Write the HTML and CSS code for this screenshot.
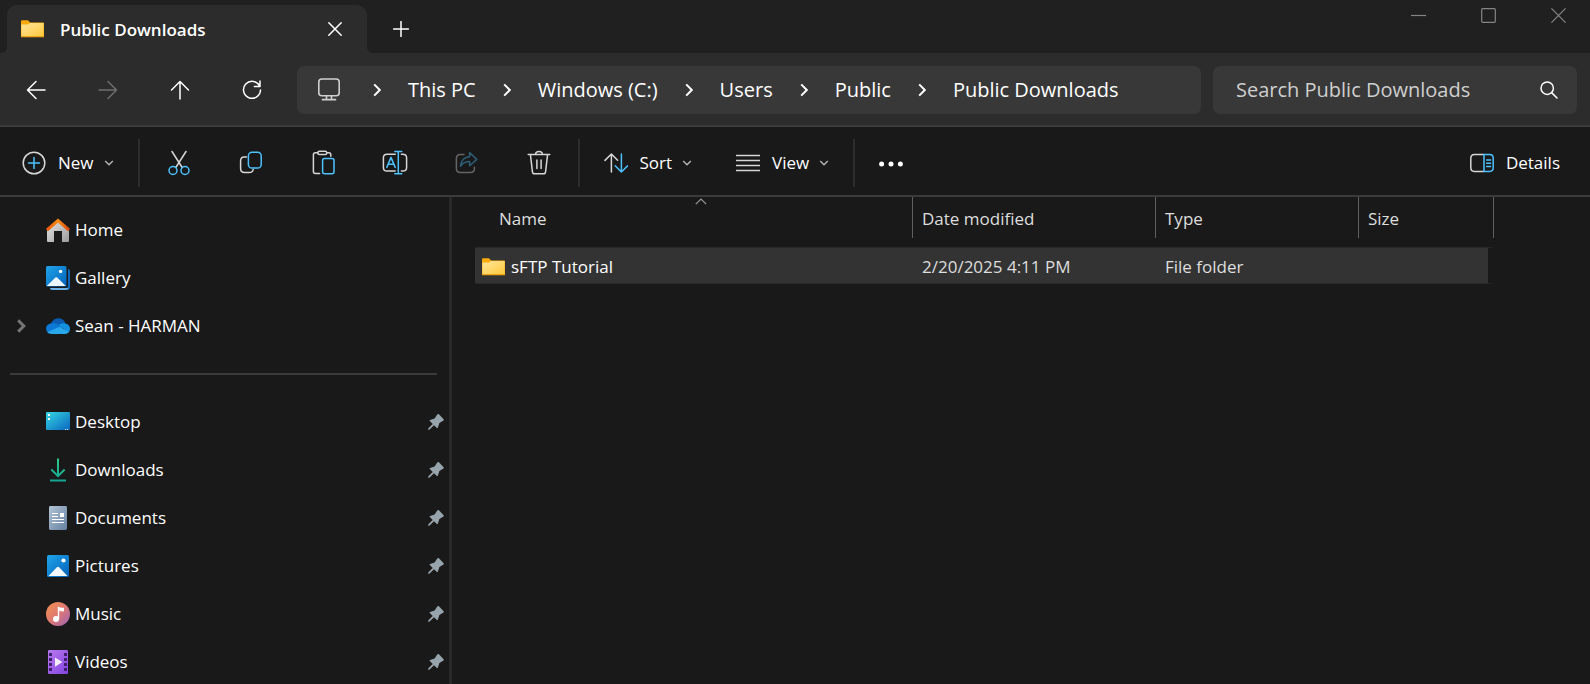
FILE: index.html
```
<!DOCTYPE html>
<html lang="en">
<head>
    <meta charset="UTF-8">
    <meta name="viewport" content="width=device-width, initial-scale=1.0">
    <title>Public Downloads</title>
    <link rel="stylesheet" href="styles.css">
</head>
<body>
    <svg class="defs" aria-hidden="true">
        <defs>
            <linearGradient id="g-folder" x1="0" y1="0" x2="1" y2="1"><stop offset="0" stop-color="#ffe69c"/><stop offset="1" stop-color="#ffc93c"/></linearGradient>
            <linearGradient id="g-blue" x1="0" y1="0" x2="1" y2="1"><stop offset="0" stop-color="#1fa5ea"/><stop offset="1" stop-color="#0560b8"/></linearGradient>
            <linearGradient id="g-roof" x1="0" y1="0" x2="1" y2="0"><stop offset="0" stop-color="#e8590c"/><stop offset=".5" stop-color="#f98a16"/><stop offset="1" stop-color="#d64a0b"/></linearGradient>
            <linearGradient id="g-wall" x1="0" y1="0" x2="1" y2="1"><stop offset="0" stop-color="#e6e6e6"/><stop offset="1" stop-color="#9c9c9c"/></linearGradient>
            <linearGradient id="g-desk" x1="0" y1="0" x2="1" y2="1"><stop offset="0" stop-color="#35d6e2"/><stop offset="1" stop-color="#0a66c0"/></linearGradient>
            <linearGradient id="g-down" x1="0" y1="0" x2="0" y2="1"><stop offset="0" stop-color="#2fc98a"/><stop offset="1" stop-color="#12a594"/></linearGradient>
            <linearGradient id="g-doc" x1="0" y1="0" x2="1" y2="1"><stop offset="0" stop-color="#b3c4d6"/><stop offset="1" stop-color="#64809f"/></linearGradient>
            <linearGradient id="g-music" x1="0" y1="0" x2="1" y2="1"><stop offset="0" stop-color="#f6934c"/><stop offset=".5" stop-color="#de7872"/><stop offset="1" stop-color="#9a63b8"/></linearGradient>
            <linearGradient id="g-video" x1="0" y1="0" x2="1" y2="1"><stop offset="0" stop-color="#b87af0"/><stop offset="1" stop-color="#8443e0"/></linearGradient>
        </defs>
        <symbol id="i-folder" viewBox="0 0 23 18">
            <path d="M0 1.5Q0 .3 1.2 .3H7l2 2.2h13q1 0 1 1V17H0z" fill="#f9ab0c"/>
            <path d="M.4 4.5h6.8l1.8-1.6h13.6v13.6H.4z" fill="url(#g-folder)"/>
            <path d="M0 16.8h23" stroke="#e39a0a"/>
        </symbol>
        <symbol id="i-chev-right" viewBox="0 0 8 14"><path d="M1.2 1.4 6.8 7l-5.6 5.6"/></symbol>
        <symbol id="i-chev-down" viewBox="0 0 10 6"><path d="m1.2.9 3.8 3.8L8.8.9"/></symbol>
        <symbol id="i-pin" viewBox="0 0 16 16">
            <path d="M9.4.3Q10.4-.2 11.2.6l4.2 4.500q.9 1-.3 1.700L11.400 9l-1.500 4.400q-.4 1-1.200.3L6 11.200 1.600 15.600.2 16l.2-1.700L4.700 9.900 1.800 7.100q-.7-.8.4-1.200l4.400-1.400z"/>
        </symbol>
    </svg>

    <div class="window">
        <header class="titlebar">
            <div class="tab">
                <svg class="folder"><use href="#i-folder"/></svg>
                <span class="tab-title">Public Downloads</span>
                <button class="tab-close" aria-label="Close tab">
                    <svg width="14" height="14" class="line"><path d="M.8.8l12.4 12.4M13.2.8.8 13.2"/></svg>
                </button>
            </div>
            <button class="new-tab" aria-label="New tab">
                <svg width="16" height="16" class="line"><path d="M8 .5v15M.5 8h15"/></svg>
            </button>
            <div class="window-controls">
                <button aria-label="Minimize"><svg width="15" height="15" class="line"><path d="M0 7.5h15"/></svg></button>
                <button aria-label="Maximize"><svg width="15" height="15" class="line"><rect x=".7" y=".7" width="13.6" height="13.6" rx="1"/></svg></button>
                <button aria-label="Close"><svg width="15" height="15" class="line"><path d="M.4.4l14.2 14.2M14.6.4.4 14.6"/></svg></button>
            </div>
        </header>

        <div class="navbar">
            <nav class="nav-buttons">
                <button aria-label="Back"><svg width="20" height="20" class="line"><path d="M19 10H1.5M10 1.5 1.5 10l8.500 8.500"/></svg></button>
                <button aria-label="Forward" disabled><svg width="20" height="20" class="line"><path d="M1 10h17.500M10 1.500l8.500 8.500-8.500 8.500"/></svg></button>
                <button aria-label="Up"><svg width="20" height="20" class="line"><path d="M10 19V1.500M1.500 10 10 1.500l8.500 8.500"/></svg></button>
                <button aria-label="Refresh"><svg width="20" height="20" class="line"><path d="M17.600 6A8.500 8.500 0 1 0 18.500 10M18 1v5.600h-5.600"/></svg></button>
            </nav>
            <div class="address">
                <svg width="24" height="24" class="pc"><rect x="1.8" y="1" width="20.4" height="16.8" rx="3"/><path d="M9.500 17.800v3.600M14.500 17.800v3.600M4.800 21.600h14.400"/></svg>
                <svg class="crumb-sep"><use href="#i-chev-right"/></svg>
                <a href="#">This PC</a>
                <svg class="crumb-sep"><use href="#i-chev-right"/></svg>
                <a href="#">Windows (C:)</a>
                <svg class="crumb-sep"><use href="#i-chev-right"/></svg>
                <a href="#">Users</a>
                <svg class="crumb-sep"><use href="#i-chev-right"/></svg>
                <a href="#">Public</a>
                <svg class="crumb-sep"><use href="#i-chev-right"/></svg>
                <a href="#">Public Downloads</a>
            </div>
            <div class="search">
                <input type="text" placeholder="Search Public Downloads" aria-label="Search Public Downloads">
                <svg width="18" height="18" class="line"><circle cx="7.2" cy="7.2" r="6.2"/><path d="m11.6 11.6 5.4 5.4"/></svg>
            </div>
        </div>

        <div class="commands">
            <button class="command">
                <svg width="24" height="24" class="icon"><circle cx="12" cy="12" r="10.8"/><path class="accent" d="M12 6.500v11M6.500 12h11"/></svg>
                New
                <svg class="chevron"><use href="#i-chev-down"/></svg>
            </button>
            <span class="divider"></span>
            <div class="icon-buttons">
                <button aria-label="Cut">
                    <svg width="24" height="26" class="icon"><path d="M5 1.500l10.200 16M19 1.500 8.800 17.500"/><g class="accent"><circle cx="6" cy="20.5" r="4"/><circle cx="18" cy="20.5" r="4"/></g></svg>
                </button>
                <button aria-label="Copy">
                    <svg width="24" height="26" class="icon"><path d="M7.500 7H5.200Q1.600 7 1.600 11v7.500q0 4 4 4h4.600q3.600 0 4-3"/><rect class="accent" x="9.4" y="2.2" width="12.8" height="15.8" rx="3.6"/></svg>
                </button>
                <button aria-label="Paste">
                    <svg width="24" height="26" class="icon"><path d="M8.600 23.600H4.400q-2 0-2-2V4.800q0-2 2-2h2.400M15.800 2.800h2q2 0 2 2v1.400"/><rect x="6.8" y="1.3" width="9" height="3.2" rx="1.6"/><rect class="accent" x="11.6" y="8.4" width="11.4" height="15.4" rx="2"/></svg>
                </button>
                <button aria-label="Rename">
                    <svg width="26" height="26" class="icon"><path d="M13.200 4.200H5Q1.400 4.200 1.400 7.800v9.600q0 3.600 3.600 3.600h8.200M19.400 4.200h1.200q4 0 4 3.600v9.600q0 3.600-4 3.600h-1.200"/><path class="accent" d="M4.800 17.400 9 7.400l4.200 10M6.200 14.200h5.600M16.300 1.400v22.400M12.800 1.400h7M12.800 23.800h7"/></svg>
                </button>
                <button aria-label="Share" disabled>
                    <svg width="24" height="26" class="icon"><path d="M9 4.400H5.400q-4 0-4 4v10q0 4 4 4h10q4 0 4-4v-1.200"/><path class="accent" d="M14.600 2.600v4.200Q6.600 7.200 5.400 16.200q3.600-4.600 9.200-4.600v4.200l7.200-6.400z"/></svg>
                </button>
                <button aria-label="Delete">
                    <svg width="24" height="26" class="icon"><path d="M1.200 4.400h21.600M8.600 4.400q0-3 3.400-3t3.400 3M3.400 4.400l2 17.200q.2 2.200 2.200 2.200h8.800q2 0 2.200-2.200l2-17.200M9.900 10v8.400M14.100 10v8.400"/></svg>
                </button>
            </div>
            <span class="divider"></span>
            <button class="command">
                <svg width="24" height="24" class="icon"><path d="M7.400 21V3M1 9.400 7.400 3l6.200 6.200"/><path class="accent" d="M17.400 3v18M11.200 14.800l6.200 6.200 6.200-6.200"/></svg>
                Sort
                <svg class="chevron"><use href="#i-chev-down"/></svg>
            </button>
            <button class="command">
                <svg width="24" height="24" class="icon"><path d="M0 4.500h24M0 9.500h24M0 14.500h24M0 19.500h24"/></svg>
                View
                <svg class="chevron"><use href="#i-chev-down"/></svg>
            </button>
            <span class="divider"></span>
            <button class="command" aria-label="See more">
                <svg width="24" height="24" class="dots"><circle cx="2.6" cy="13" r="2.5"/><circle cx="12" cy="13" r="2.5"/><circle cx="21.4" cy="13" r="2.5"/></svg>
            </button>
            <button class="command details">
                <svg width="24" height="20" class="icon"><path d="M13.600 1.600H4.400Q.8 1.600.8 5.200v9.600q0 3.600 3.600 3.600h9.200"/><path class="accent" d="M14 1.600h5.600q3.600 0 3.600 3.600v9.600q0 3.600-3.600 3.600H14zM16.600 7h4M16.600 10.200h4M16.600 13.400h4"/></svg>
                Details
            </button>
        </div>

        <main class="content">
            <aside class="sidebar">
                <ul>
                    <li><a href="#">
                        <svg viewBox="0 0 24 24"><path d="M1 11 12 1.500 23 11v12q0 1-1 1h-6V13H8v11H2q-1 0-1-1z" fill="url(#g-wall)"/><path d="M.9 12.100 12 2.600l11.100 9.500" fill="none" stroke="url(#g-roof)" stroke-width="3.2"/></svg>
                        Home
                    </a></li>
                    <li><a href="#">
                        <svg viewBox="0 0 24 24"><path d="M22 3q2 .2 2 2v16q0 3-3 3H6q-1.600 0-2-2h16q2 0 2-2z" fill="#0c67bd"/><path d="M4 22h18.600q-.6 2-2.600 2H6q-1.600 0-2-2z" fill="#6fb0e6"/><rect width="20.5" height="20.5" rx="1.6" fill="url(#g-blue)"/><path d="m.8 20 8.600-8.400q.9-.8 1.800 0l8.600 8.400z" fill="#eef6fd"/><circle cx="14.6" cy="5.4" r="1.7" fill="#fff"/></svg>
                        Gallery
                    </a></li>
                    <li><a href="#">
                        <svg class="expand"><use href="#i-chev-right"/></svg>
                        <svg viewBox="0 0 24 24"><path d="M5 9.500Q7.500 4 13 4.200q4.800.4 6.600 5.300L14 14z" fill="#0b5cb0"/><path d="M5.200 9.200Q9 8.200 12 10.600l5 3L2 18.500Q0 17 0 14.500q.2-4.500 5.200-5.300z" fill="#0a78d4"/><path d="M12.500 11q3-2.400 7-1.500Q24 10.600 24 15q0 2-1.400 3.500z" fill="#1490df"/><path d="M1.200 18 12.600 13.200q1-.4 2 0l8.400 4.600Q21.600 20 19 20H5.500q-3 0-4.300-2z" fill="#28a8ea"/></svg>
                        Sean - HARMAN
                    </a></li>
                </ul>
                <hr>
                <ul>
                    <li><a href="#">
                        <svg viewBox="0 0 24 24"><rect y="2" width="24" height="18" rx="1" fill="url(#g-desk)"/><path d="M2 4h2v2H2zM2 8h2v2H2z" fill="#fff"/><path d="M19 19h1.200v1H19zM21 19h1.200v1H21z" fill="#bfe0f5"/></svg>
                        Desktop
                        <svg class="pin"><use href="#i-pin"/></svg>
                    </a></li>
                    <li><a href="#">
                        <svg viewBox="0 0 24 24"><path d="M11 .5h2v15.200l5-5 1.300 1.500L12 19.500l-7.300-7.300L6 10.700l5 5zM4 21.500h16v2H4z" fill="url(#g-down)"/></svg>
                        Downloads
                        <svg class="pin"><use href="#i-pin"/></svg>
                    </a></li>
                    <li><a href="#">
                        <svg viewBox="0 0 24 24"><rect x="3" width="18" height="24" rx="1.4" fill="url(#g-doc)"/><path d="M6 7.500h6M6 10.500h6M6 13.500h12M6 16.500h12" stroke="#fff" stroke-width="1.2"/><path d="M14 7h4v4h-4z" fill="#fff"/></svg>
                        Documents
                        <svg class="pin"><use href="#i-pin"/></svg>
                    </a></li>
                    <li><a href="#">
                        <svg viewBox="0 0 24 24"><rect x="1" y="1" width="22" height="22" rx="1.6" fill="url(#g-blue)"/><path d="m2.500 22 8.400-8.800q1.100-1 2.200 0l8.400 8.800z" fill="#f2f8fd"/><circle cx="17.5" cy="6.5" r="2.1" fill="#fff"/></svg>
                        Pictures
                        <svg class="pin"><use href="#i-pin"/></svg>
                    </a></li>
                    <li><a href="#">
                        <svg viewBox="0 0 24 24"><circle cx="12" cy="12" r="12" fill="url(#g-music)"/><circle cx="10" cy="17" r="3" fill="#fff"/><path d="M11.800 4.500q3 1.800 6.200 1.200v3.600q-2.600.4-4.800-.8V17h-1.400z" fill="#fff"/></svg>
                        Music
                        <svg class="pin"><use href="#i-pin"/></svg>
                    </a></li>
                    <li><a href="#">
                        <svg viewBox="0 0 24 24"><rect x="2" width="20" height="24" rx="1.2" fill="url(#g-video)"/><path d="M3 3h3v3H3zM3 8h3v3H3zM3 13h3v3H3zM3 18h3v3H3zM18 3h3v3h-3zM18 8h3v3h-3zM18 13h3v3h-3zM18 18h3v3h-3z" fill="#3d1f6e"/><path d="M9 7.500v9.200l7.400-4.600z" fill="#f4edfc"/></svg>
                        Videos
                        <svg class="pin"><use href="#i-pin"/></svg>
                    </a></li>
                </ul>
            </aside>

            <section class="files">
                <table>
                    <thead>
                        <tr>
                            <th class="col-name">Name<svg class="sort-mark" width="12" height="7"><path d="m.8 6.200 5.200-5.200 5.200 5.200"/></svg></th>
                            <th class="col-date">Date modified</th>
                            <th class="col-type">Type</th>
                            <th class="col-size">Size</th>
                        </tr>
                    </thead>
                    <tbody>
                        <tr>
                            <td><a href="#"><svg class="folder"><use href="#i-folder"/></svg>sFTP Tutorial</a></td>
                            <td>2/20/2025 4:11 PM</td>
                            <td>File folder</td>
                            <td></td>
                        </tr>
                    </tbody>
                </table>
            </section>
        </main>
    </div>
</body>
</html>
```
FILE: styles.css
```
* {
    box-sizing: border-box;
}

body {
    margin: 0;
    background-color: #191919;
    color: #fff;
    font-family: "Open Sans", "Noto Sans", sans-serif;
    font-size: 17px;
    line-height: 24px;
}

button, input {
    font: inherit;
    color: inherit;
    background: none;
    border: 0;
    padding: 0;
}

button {
    display: flex;
    align-items: center;
    justify-content: center;
}

a {
    color: inherit;
    text-decoration: none;
}

svg {
    flex: none;
}

.defs {
    position: absolute;
    width: 0;
    height: 0;
}

.window {
    display: flex;
    flex-direction: column;
    height: 100vh;
    overflow: hidden;
}

.line {
    fill: none;
    stroke: currentColor;
    stroke-width: 1.5;
    stroke-linecap: round;
    stroke-linejoin: round;
}

.folder {
    width: 23px;
    height: 18px;
}

/* Title bar */
.titlebar {
    display: flex;
    align-items: flex-start;
    height: 53px;
    padding: 5px 0 0 7px;
    background-color: #202020;
}

.tab {
    position: relative;
    display: flex;
    align-items: center;
    width: 360px;
    height: 48px;
    padding: 0 20px 0 14px;
    border-radius: 10px 10px 0 0;
    background-color: #2c2c2c;
}

/* Curved feet where the tab meets the bar below */
.tab::before,
.tab::after {
    content: "";
    position: absolute;
    bottom: 0;
    width: 6px;
    height: 6px;
}

.tab::before {
    right: 100%;
    background: radial-gradient(circle at 0 0, transparent 6px, #2c2c2c 6px);
}

.tab::after {
    left: 100%;
    background: radial-gradient(circle at 100% 0, transparent 6px, #2c2c2c 6px);
}

.tab-title {
    flex: 1;
    margin-left: 16px;
    padding-top: 2px;
    font-weight: 600;
}

.tab-close {
    width: 24px;
    height: 24px;
}

.new-tab {
    width: 48px;
    height: 48px;
    margin-left: 10px;
}

.window-controls {
    display: flex;
    gap: 6px;
    margin-left: auto;
    color: #858585;
}

.window-controls button {
    width: 64px;
    height: 20px;
}

.window-controls .line {
    stroke-width: 1.2;
    stroke-linecap: butt;
}

/* Navigation */
.navbar {
    display: flex;
    align-items: center;
    height: 74px;
    padding: 2px 13px 0 12px;
    background-color: #2c2c2c;
    border-bottom: 2px solid #3b3b3b;
    font-size: 20px;
}

.nav-buttons,
.icon-buttons {
    display: flex;
    gap: 24px;
}

.nav-buttons button,
.icon-buttons button {
    width: 48px;
    height: 48px;
}

.nav-buttons button:disabled {
    color: #6f6f6f;
}

.address {
    display: flex;
    align-items: center;
    flex: 1;
    height: 48px;
    margin: 0 12px 0 21px;
    padding-left: 20px;
    border-radius: 7px;
    background-color: #383838;
    white-space: nowrap;
}

.pc {
    margin-right: 5px;
    fill: none;
    stroke: #cfcfcf;
    stroke-width: 1.6;
}

.crumb-sep {
    width: 8px;
    height: 14px;
    margin: 0 27px;
    fill: none;
    stroke: #fff;
    stroke-width: 2;
}

.search {
    display: flex;
    align-items: center;
    width: 364px;
    height: 48px;
    padding: 0 19px 0 23px;
    border-radius: 7px;
    background-color: #383838;
}

.search input {
    flex: 1;
    min-width: 0;
    outline: none;
}

.search input::placeholder {
    color: #cfcfcf;
    opacity: 1;
}

/* Command bar */
.commands {
    display: flex;
    align-items: center;
    height: 70px;
    padding-top: 4px;
    border-bottom: 2px solid #3b3b3b;
}

.command {
    gap: 12px;
    height: 48px;
    padding: 0 22px;
}

.icon {
    fill: none;
    stroke: #d6d6d6;
    stroke-width: 1.5;
    stroke-linecap: round;
    stroke-linejoin: round;
}

.accent {
    stroke: #4cc2ff;
}

button:disabled .icon {
    opacity: 0.4;
}

.chevron {
    width: 10px;
    height: 6px;
    margin-left: -2px;
    fill: none;
    stroke: #b5b5b5;
    stroke-width: 1.4;
}

.dots {
    fill: #fff;
}

.divider {
    width: 2px;
    height: 48px;
    margin: 0 2px;
    background-color: #2d2d2d;
}

.icon-buttons {
    margin: 0 13px;
}

.details {
    margin-left: auto;
    padding-right: 30px;
}

/* Sidebar */
.content {
    display: flex;
    flex: 1;
    min-height: 0;
}

.sidebar {
    width: 452px;
    padding-top: 9px;
    border-right: 3px solid #292929;
    overflow: hidden;
}

.sidebar ul {
    margin: 0;
    padding: 0;
    list-style: none;
}

.sidebar a {
    position: relative;
    display: flex;
    align-items: center;
    gap: 5px;
    height: 48px;
    padding: 0 5px 0 46px;
}

.sidebar a svg {
    width: 24px;
    height: 24px;
}

.sidebar a .expand {
    position: absolute;
    left: 16px;
    width: 10px;
    height: 14px;
    fill: none;
    stroke: #757575;
    stroke-width: 3;
}

.sidebar a .pin {
    width: 16px;
    height: 16px;
    margin-left: auto;
    fill: #98a4ac;
}

.sidebar hr {
    height: 2px;
    margin: 23px 12px 23px 10px;
    border: 0;
    background-color: #3b3b3b;
}

/* File list */
.files {
    flex: 1;
    padding-left: 23px;
}

table {
    width: 1019px;
    border-collapse: separate;
    border-spacing: 0;
    table-layout: fixed;
}

th {
    position: relative;
    height: 41px;
    padding: 3px 9px 0;
    border-right: 1px solid #606060;
    color: #dedede;
    font-weight: 400;
    text-align: left;
}

.col-name {
    width: 438px;
    padding-left: 24px;
}

.col-date {
    width: 243px;
}

.col-type {
    width: 203px;
}

.sort-mark {
    position: absolute;
    top: 1px;
    left: 220px;
    fill: none;
    stroke: #9a9a9a;
    stroke-width: 1.2;
}

tbody::before {
    content: "";
    display: block;
    height: 9px;
}

td {
    height: 37px;
    padding: 2px 9px 0;
    border: solid #2a2a2a;
    border-width: 1px 0;
    background-color: #333;
    color: #dedede;
}

td:first-child {
    padding-left: 7px;
    border-radius: 2px 0 0 2px;
    color: #fff;
}

/* The row highlight stops short of the last column edge */
td:last-child {
    border-right: 6px solid transparent;
    background-clip: padding-box;
}

td a {
    display: flex;
    align-items: center;
    gap: 6px;
}
```
